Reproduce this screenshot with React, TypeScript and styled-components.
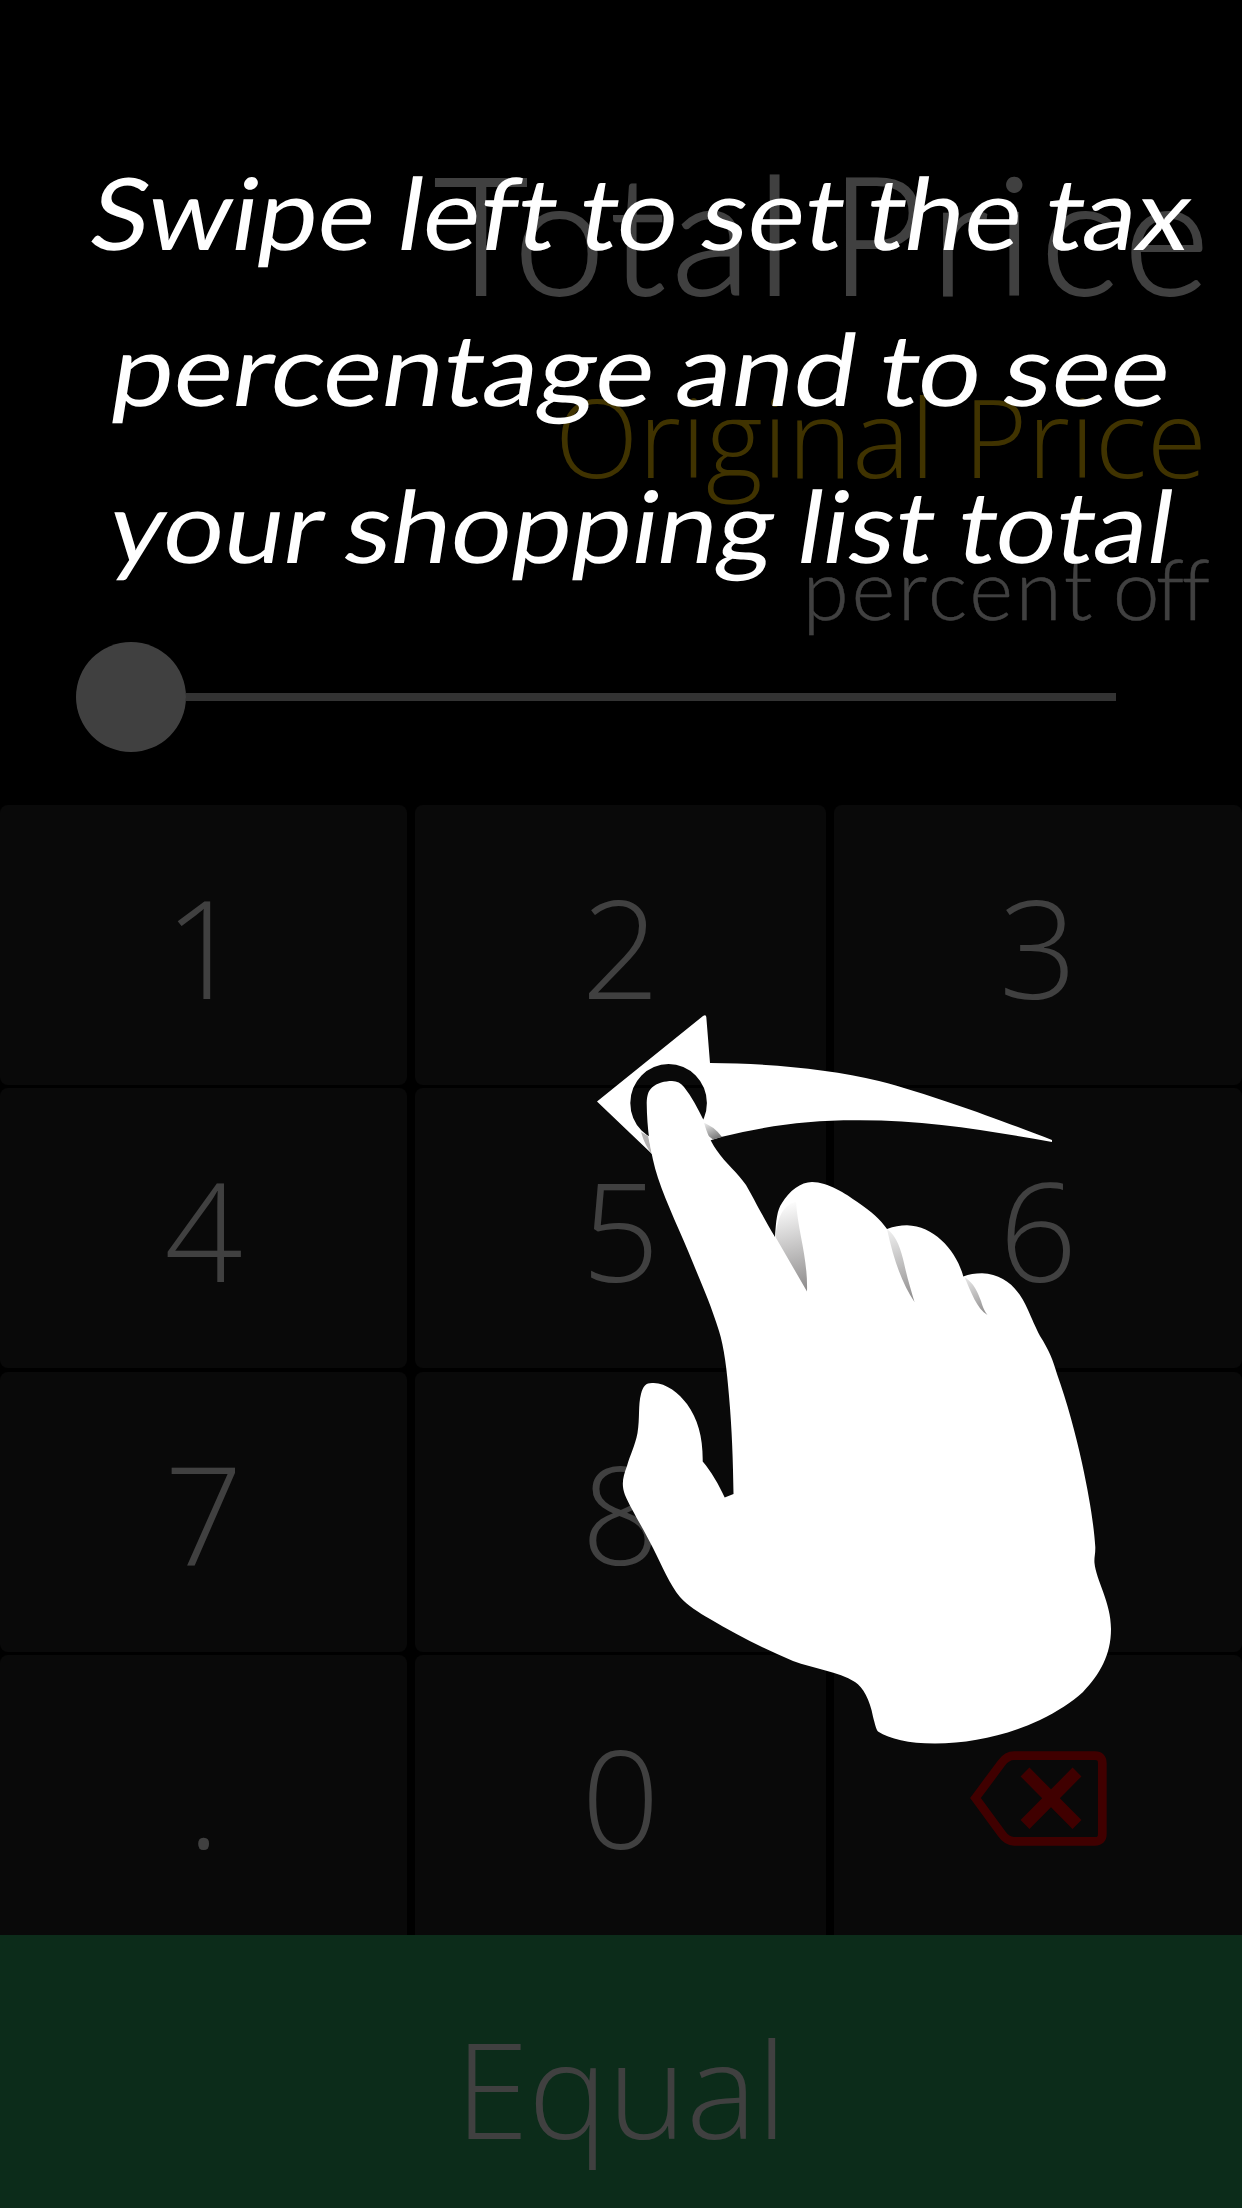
import React from "react";
import styled, { createGlobalStyle } from "styled-components";

const GlobalStyle = createGlobalStyle`
  *, *::before, *::after { box-sizing: border-box; }
  body { margin: 0; background: #000; }
`;

const Screen = styled.main`
  position: relative;
  display: flex;
  flex-direction: column;
  width: 1242px;
  height: 2208px;
  overflow: hidden;
  background: #000;
`;

const Display = styled.header`
  display: flex;
  flex-direction: column;
  align-items: flex-end;
  height: 805px;
  padding: 149px 32px 0 76px;
`;

const Readout = styled.div<{ $size: number; $height: number; $gap: number; $tracking: number; $words?: number; $color?: string; $family?: string; $right?: number; $stroke?: number }>`
  height: ${(p) => p.$height}px;
  margin-bottom: ${(p) => p.$gap}px;
  margin-right: ${(p) => p.$right ?? 0}px;
  font: 300 ${(p) => p.$size}px/${(p) => p.$height}px ${(p) => p.$family ?? "Lato"}, sans-serif;
  letter-spacing: ${(p) => p.$tracking}px;
  word-spacing: ${(p) => p.$words ?? 0}px;
  color: ${(p) => p.$color ?? "#fff"};
  -webkit-text-stroke: ${(p) => p.$stroke ?? 0}px currentColor;
  white-space: nowrap;
`;

const Word = styled.span<{ $tracking: number }>`
  letter-spacing: ${(p) => p.$tracking}px;
`;

const Slider = styled.div`
  display: flex;
  align-items: center;
  align-self: flex-start;
  width: 1040px;
  height: 110px;
`;

const Thumb = styled.div`
  flex: none;
  width: 110px;
  height: 110px;
  border-radius: 50%;
  background: #fff;
`;

const Track = styled.div`
  flex: 1;
  height: 8px;
  background: #ccc;
`;

const Keypad = styled.section`
  display: grid;
  grid-template-columns: 407px 411px 408px;
  grid-template-rows: repeat(4, 280px);
  gap: 3.4px 8px;
  height: 1130.3px;
`;

const Key = styled.button`
  display: flex;
  align-items: center;
  justify-content: center;
  padding: 2px 0 0;
  border: 0;
  border-radius: 8px;
  background: #242424;
  color: #fff;
  font: 300 137px/1 "Open Sans", sans-serif;

  &:nth-child(n + 10) {
    border-radius: 8px 8px 0 0;
  }
`;

const DeleteIcon = styled.svg`
  width: 138px;
  height: 96px;
  margin-top: 4px;
`;

const EqualKey = styled.button`
  flex: 1;
  display: flex;
  align-items: center;
  justify-content: center;
  padding: 32px 0 0;
  border: 0;
  background: #30b068;
  color: #fff;
  font: 300 133px/1 "Open Sans", sans-serif;
`;

const Coach = styled.div`
  position: absolute;
  inset: 0;
  background: rgba(0, 0, 0, 0.75);
`;

const Message = styled.p`
  display: flex;
  flex-direction: column;
  align-items: center;
  margin: 0;
  padding: 133px 0 0 43px;
  color: #fff;
  font: 400 100px/156.3px Lato, sans-serif;
  font-variant-ligatures: none;
`;

const Line = styled.span<{ $stretch: number; $words: number }>`
  word-spacing: ${(p) => p.$words}px;
  white-space: nowrap;
  transform: skewX(-9deg) scaleX(${(p) => p.$stretch});
`;

const Gesture = styled.svg`
  position: absolute;
  left: 590px;
  top: 1010px;
  width: 530px;
  height: 740px;
`;

const KEYS = ["1", "2", "3", "4", "5", "6", "7", "8", "9", ".", "0"];

function SwipeHand() {
  return (
    <Gesture viewBox="590 1010 530 740">
      <defs>
        <linearGradient id="fold1" gradientUnits="userSpaceOnUse" x1="785" y1="1202" x2="806" y2="1291">
          <stop offset="0" stopColor="#fff" />
          <stop offset="1" stopColor="#8c8a8a" />
        </linearGradient>
        <linearGradient id="fold2" gradientUnits="userSpaceOnUse" x1="890" y1="1230" x2="914" y2="1302">
          <stop offset="0" stopColor="#eee" />
          <stop offset="1" stopColor="#8c8a8a" />
        </linearGradient>
        <linearGradient id="fold3" gradientUnits="userSpaceOnUse" x1="966" y1="1277" x2="987" y2="1315">
          <stop offset="0" stopColor="#e8e8e8" />
          <stop offset="1" stopColor="#8c8a8a" />
        </linearGradient>
        <linearGradient id="tipRight" gradientUnits="userSpaceOnUse" x1="706" y1="1122" x2="714" y2="1140">
          <stop offset="0" stopColor="#eee" />
          <stop offset="1" stopColor="#777" />
        </linearGradient>
      </defs>
      <path
        fill="#fff"
        fillRule="evenodd"
        d="M597 1101.5L703 1016Q706 1014 706.3 1017L710 1063C770 1063.500 830 1069 879 1081C940 1097 1010 1124 1052 1140V1142C990 1131 930 1120.500 860 1120.300C810 1120 770 1125 721 1137L680 1150L652 1154ZM630.300 1103A38.300 39 0 1 0 706.900 1103A38.300 39 0 1 0 630.300 1103Z"
      />
      <path fill="#b5b3b3" d="M641 1132L648 1136L652 1154Q645 1146 641 1132Z" />
      <path fill="url(#tipRight)" d="M702 1122Q714 1126 722 1137L713 1139.500L706 1134Z" />
      <path
        fill="#fff"
        d="M646.700 1103C647 1096 648 1091 652 1087.500C657 1083 665 1081 672 1081C677 1081 681 1083 684 1087C692 1097 698 1109 703 1119C706 1130 709 1139 716.500 1150C726 1164 738 1173 746 1185C753 1197 763 1217 775 1237C776 1221 777 1210 782 1203C789 1191 801 1182 812 1182C828 1182 846 1194 857 1201.700C872 1212 880 1219 887 1229C894 1226.500 900 1225.300 907 1225.300C935 1226 957 1252 963.300 1276.500C969 1274 975 1273.300 982 1273.300C1006 1274 1020 1291 1028 1310C1032 1319 1035 1326 1040 1336C1049 1350 1053 1360 1057 1374C1067 1402 1076 1435 1082 1463C1090 1500 1094 1527 1095.300 1547C1095.500 1554 1094 1558 1094.500 1563C1096 1580 1111 1602 1111 1629C1111 1655 1100 1674 1083 1692C1071 1703 1058 1711 1040 1720C1006 1736 970 1743.500 935 1743.500C908 1743.500 890 1739 878 1731.500C876 1729 875 1724 873 1716.700C870 1700 863 1687 855 1682C838 1671 814 1669 793 1661C762 1648 735 1634 710 1619C698 1612 688 1606 680 1597C670 1585 662 1566 653 1548C644 1530 630 1507 625 1495C621 1484 623 1477 627 1466C630 1455 635 1446 637.500 1433C640 1418 638 1405 641 1394C643 1386 646 1383 652 1383C665 1382 679 1393 687 1404C698 1419 703 1438 702.700 1461.500C711 1471 719 1485 724.700 1497.500L733.500 1494C733 1460 732 1430 729 1396C727 1370 724 1347 719 1331C711 1305 702 1285 693 1263C681 1233 667 1205 658 1178C650 1153 647 1128 646.700 1103Z"
      />
      <path fill="url(#fold1)" d="M775.500 1237C777 1219 783 1204 796 1202C798 1232 808 1258 807 1291.500Z" />
      <path fill="url(#fold2)" d="M887 1229C897 1236 901 1250 904 1263C907 1277 911 1290 914.500 1302C903 1285 894 1262 887 1229Z" />
      <path fill="url(#fold3)" d="M964.500 1277C974 1283 978 1293 981 1301C983 1308 985 1312 987.500 1315C977 1309 971 1292 964.500 1277Z" />
    </Gesture>
  );
}

export default function App() {
  return (
    <>
      <GlobalStyle />
      <Screen>
        <Display>
          <Readout $size={164} $height={165} $gap={67} $tracking={5.7} $words={-19} $right={-7} $stroke={1.8}>
            Total <Word $tracking={7.7}>Price</Word>
          </Readout>
          <Readout $size={109} $height={110} $gap={55} $tracking={0.2} $right={3} $color="#fc0" $family='"Open Sans"'>Original Price</Readout>
          <Readout $size={84} $height={84} $gap={12} $tracking={2.6} $words={-8} $right={3} $stroke={0.4}>
            percent <Word $tracking={-3}>off</Word>
          </Readout>
          <Slider>
            <Thumb />
            <Track />
          </Slider>
        </Display>
        <Keypad>
          {KEYS.map((k) => (
            <Key key={k}>{k}</Key>
          ))}
          <Key aria-label="Delete">
            <DeleteIcon viewBox="969 1750 138 96" fill="none" stroke="#f00">
              <path strokeWidth="8.700" d="M975.500 1798L1001.500 1763Q1007 1755.700 1014 1755.700H1095Q1102.300 1755.700 1102.300 1763V1834Q1102.300 1841.300 1095 1841.300H1014Q1007 1841.300 1001.500 1833.500Z" />
              <path strokeWidth="12.500" d="M1025 1772L1077 1824.500M1077 1772L1025 1824.500" />
            </DeleteIcon>
          </Key>
        </Keypad>
        <EqualKey>Equal</EqualKey>
        <Coach>
          <Message>
            <Line $stretch={1.075} $words={-4}>Swipe left to set the tax</Line>
            <Line $stretch={1.113} $words={-5.5}>percentage and to see</Line>
            <Line $stretch={1.072} $words={-3}>your shopping list total</Line>
          </Message>
          <SwipeHand />
        </Coach>
      </Screen>
    </>
  );
}
